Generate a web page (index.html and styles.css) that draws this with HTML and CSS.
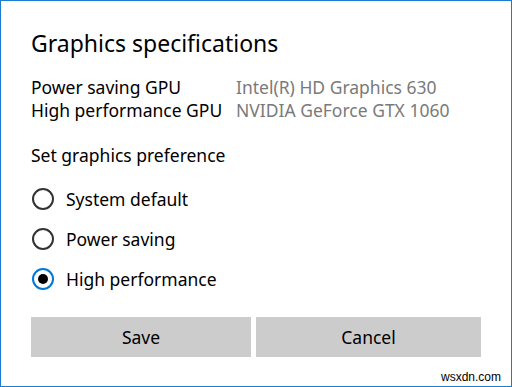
FILE: index.html
```html
<!DOCTYPE html>
<html>
<head>
<meta charset="utf-8">
<link rel="stylesheet" href="styles.css">
</head>
<body>
<div class="dialog">
  <h1 class="title">Graphics specifications</h1>
  <div class="specs">
    <div class="label">Power saving GPU</div><div class="value">Intel(R) HD Graphics 630</div>
    <div class="label">High performance GPU</div><div class="value">NVIDIA GeForce GTX 1060</div>
  </div>
  <div class="pref">Set graphics preference</div>
  <div class="options">
    <div class="option"><span class="radio"></span><span class="opt-label">System default</span></div>
    <div class="option"><span class="radio"></span><span class="opt-label">Power saving</span></div>
    <div class="option"><span class="radio checked"></span><span class="opt-label">High performance</span></div>
  </div>
  <div class="buttons">
    <div class="btn save">Save</div>
    <div class="btn cancel">Cancel</div>
  </div>
  <div class="watermark">wsxdn.com</div>
</div>
</body>
</html>
```
FILE: styles.css
```css
html, body { margin: 0; padding: 0; background: #fff; }
body { font-family: "Noto Sans", "Open Sans", sans-serif; color: #000; }
.dialog {
  position: relative;
  box-sizing: border-box;
  width: 512px;
  height: 387px;
  border: 1px solid #1b7bd0;
  padding: 28px 0 0 30px;
}
.title {
  margin: 0;
  font-size: 23px;
  font-weight: 400;
  line-height: 28px;
  height: 28px;
}
.specs {
  margin-top: 19px;
  display: grid;
  grid-template-columns: 205px auto;
  font-size: 17.5px;
  line-height: 23px;
}
.value { color: #7a7a7a; }
.pref {
  margin-top: 22px;
  font-size: 17.5px;
  line-height: 23px;
}
.options {
  margin-top: 12px;
  display: flex;
  flex-direction: column;
}
.option {
  display: flex;
  align-items: center;
  height: 40px;
  font-size: 17.5px;
}
.radio {
  box-sizing: border-box;
  width: 22px;
  height: 22px;
  border: 2px solid #333;
  border-radius: 50%;
  margin-left: 1px;
  margin-right: 12px;
  display: flex;
  align-items: center;
  justify-content: center;
  flex: none;
}
.radio.checked { border-color: #0078d7; }
.radio.checked::after {
  content: "";
  width: 10px;
  height: 10px;
  border-radius: 50%;
  background: #000;
}
.buttons {
  margin-top: 18px;
  display: flex;
  gap: 5px;
}
.btn {
  background: #cccccc;
  height: 40px;
  display: flex;
  align-items: center;
  justify-content: center;
  font-size: 17.5px;
}
.save { width: 220px; }
.cancel { width: 225px; }
.watermark {
  position: absolute;
  right: 10px;
  bottom: 2px;
  font-family: "Liberation Sans", sans-serif;
  font-size: 12px;
  color: #000;
}
```
